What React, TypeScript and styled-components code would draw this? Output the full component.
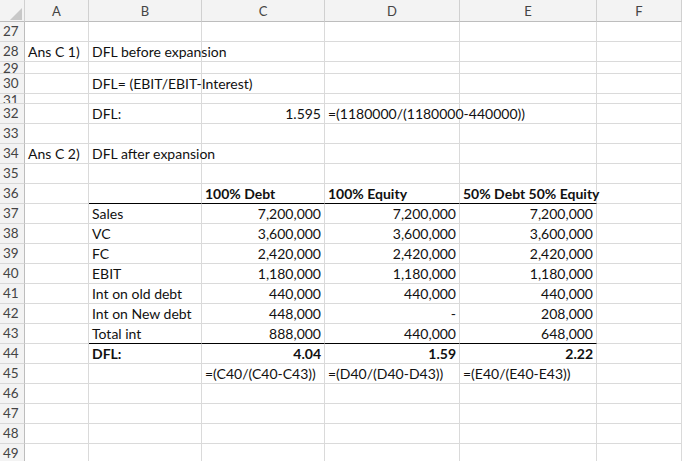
import React from 'react';
import styled, { createGlobalStyle } from 'styled-components';

const Global = createGlobalStyle`
  body { margin: 0; background: #fff; font-family: Lato, "Liberation Sans", sans-serif; }
`;

const widths = [25, 64, 113, 123, 135, 137, 85];

const Sheet = styled.div`
  display: grid;
  grid-template-columns: ${widths.map((w) => w + 'px').join(' ')};
  width: 682px;
  height: 461px;
  overflow: hidden;
`;

const Head = styled.div`
  height: 22px;
  background: #f3f3f3;
  border-right: 1px solid #d0d0d0;
  border-bottom: 1px solid #bdbdbd;
  box-sizing: border-box;
  display: flex;
  align-items: center;
  justify-content: center;
  font-size: 13px;
  color: #444;
`;

const RowNum = styled.div<{ $h: number }>`
  height: ${(p) => p.$h}px;
  background: #f3f3f3;
  border-right: 1px solid #bdbdbd;
  border-bottom: 1px solid #d8d8d8;
  box-sizing: border-box;
  font-size: 13.5px;
  color: #444;
  display: flex;
  align-items: ${(p) => (p.$h < 15 ? 'flex-start' : 'center')};
  padding-left: 3px;
  overflow: hidden;
  line-height: 1;
`;

const Cell = styled.div<{ $h: number; $right?: boolean; $bold?: boolean; $under?: boolean }>`
  height: ${(p) => p.$h}px;
  box-sizing: border-box;
  border-right: 1px solid #dadada;
  border-bottom: ${(p) => (p.$under ? '1px solid #000' : '1px solid #dadada')};
  font-size: 14px;
  font-weight: ${(p) => (p.$bold ? 700 : 400)};
  color: #111;
  display: flex;
  align-items: center;
  justify-content: ${(p) => (p.$right ? 'flex-end' : 'flex-start')};
  padding: 0 3px;
  white-space: nowrap;
  line-height: 1;
`;

type C = { t?: string; r?: boolean; b?: boolean; u?: boolean };
type Row = { n: number; h: number; cells: C[] };

const e = {};
const rows: Row[] = [
  { n: 27, h: 20, cells: [e, e, e, e, e, e] },
  { n: 28, h: 20, cells: [{ t: 'Ans C 1)' }, { t: 'DFL before expansion' }, e, e, e, e] },
  { n: 29, h: 12, cells: [e, e, e, e, e, e] },
  { n: 30, h: 20, cells: [e, { t: 'DFL= (EBIT/EBIT-Interest)' }, e, e, e, e] },
  { n: 31, h: 10, cells: [e, e, e, e, e, e] },
  { n: 32, h: 20, cells: [e, { t: 'DFL:' }, { t: '1.595', r: true }, { t: '=(1180000/(1180000-440000))' }, e, e] },
  { n: 33, h: 20, cells: [e, e, e, e, e, e] },
  { n: 34, h: 20, cells: [{ t: 'Ans C 2)' }, { t: 'DFL after expansion' }, e, e, e, e] },
  { n: 35, h: 20, cells: [e, e, e, e, e, e] },
  { n: 36, h: 20, cells: [e, { u: true }, { t: '100% Debt', b: true, u: true }, { t: '100% Equity', b: true, u: true }, { t: '50% Debt 50% Equity', b: true, u: true }, e] },
  { n: 37, h: 20, cells: [e, { t: 'Sales' }, { t: '7,200,000', r: true }, { t: '7,200,000', r: true }, { t: '7,200,000', r: true }, e] },
  { n: 38, h: 20, cells: [e, { t: 'VC' }, { t: '3,600,000', r: true }, { t: '3,600,000', r: true }, { t: '3,600,000', r: true }, e] },
  { n: 39, h: 20, cells: [e, { t: 'FC' }, { t: '2,420,000', r: true }, { t: '2,420,000', r: true }, { t: '2,420,000', r: true }, e] },
  { n: 40, h: 20, cells: [e, { t: 'EBIT' }, { t: '1,180,000', r: true }, { t: '1,180,000', r: true }, { t: '1,180,000', r: true }, e] },
  { n: 41, h: 20, cells: [e, { t: 'Int on old debt' }, { t: '440,000', r: true }, { t: '440,000', r: true }, { t: '440,000', r: true }, e] },
  { n: 42, h: 20, cells: [e, { t: 'Int on New debt' }, { t: '448,000', r: true }, { t: '-      ', r: true }, { t: '208,000', r: true }, e] },
  { n: 43, h: 20, cells: [e, { t: 'Total int', u: true }, { t: '888,000', r: true, u: true }, { t: '440,000', r: true, u: true }, { t: '648,000', r: true, u: true }, e] },
  { n: 44, h: 20, cells: [e, { t: 'DFL:', b: true }, { t: '4.04', r: true, b: true }, { t: '1.59', r: true, b: true }, { t: '2.22', r: true, b: true }, e] },
  { n: 45, h: 20, cells: [e, e, { t: '=(C40/(C40-C43))' }, { t: '=(D40/(D40-D43))' }, { t: '=(E40/(E40-E43))' }, e] },
  { n: 46, h: 20, cells: [e, e, e, e, e, e] },
  { n: 47, h: 20, cells: [e, e, e, e, e, e] },
  { n: 48, h: 20, cells: [e, e, e, e, e, e] },
  { n: 49, h: 20, cells: [e, e, e, e, e, e] },
];

const Corner = () => (
  <svg width="12" height="12" viewBox="0 0 12 12" style={{ position: 'relative', left: 4, top: 3 }}>
    <polygon points="12,0 12,12 0,12" fill="#c8c8c8" />
  </svg>
);

export default function App() {
  return (
    <>
      <Global />
      <Sheet>
        <Head><Corner /></Head>
        {['A', 'B', 'C', 'D', 'E', 'F'].map((l) => (
          <Head key={l}>{l}</Head>
        ))}
        {rows.map((row) => (
          <React.Fragment key={row.n}>
            <RowNum $h={row.h}>{row.n}</RowNum>
            {row.cells.map((c: C, i) => (
              <Cell key={i} $h={row.h} $right={c.r} $bold={c.b} $under={c.u}>
                {c.t}
              </Cell>
            ))}
          </React.Fragment>
        ))}
      </Sheet>
    </>
  );
}
